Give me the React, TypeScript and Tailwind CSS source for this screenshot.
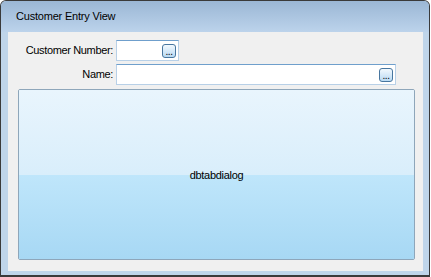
function DotsButton() {
  return (
    <div className="flex h-[14px] w-[14px] items-end justify-center rounded-[3px] border border-[#48769f] bg-gradient-to-b from-[#f3f9fe] to-[#b9daf3] pb-[1px] text-[10px] leading-[8px] tracking-[-0.5px]">
      ...
    </div>
  );
}

function LookupField({ label, width }: { label: string; width: string }) {
  return (
    <div className="flex items-center gap-[3px]">
      <span className="w-[105px] text-right tracking-[-0.35px]">{label}</span>
      <div
        className={`flex h-[21px] ${width} items-center justify-end border border-[#b8d0e7] border-t-[#6f9fcc] bg-white pr-[2px]`}
      >
        <DotsButton />
      </div>
    </div>
  );
}

export default function App() {
  return (
    <div className="h-[277px] w-[431px] bg-white font-['Liberation_Sans',Arial,sans-serif] text-[11px] text-black">
      <div className="flex h-[277px] w-[430px] flex-col overflow-hidden rounded-t-[6px] border border-b-2 border-[#3a3a3a] bg-[#bfd5ea]">
        <div className="flex h-[31px] shrink-0 items-center bg-gradient-to-b from-[#9bb7d5] to-[#bcd3eb] pl-[15px] pb-[1px] tracking-[-0.2px]">
          Customer Entry View
        </div>

        <div className="mb-[4px] ml-[7px] mr-[6px] flex flex-1 flex-col bg-[#f0f0f0] pt-[8px] pb-[11px]">
          <LookupField label="Customer Number:" width="w-[63px]" />
          <div className="mt-[3px]">
            <LookupField label="Name:" width="w-[280px]" />
          </div>

          <div className="relative mt-[4px] ml-[10px] mr-[8px] flex flex-1 flex-col overflow-hidden rounded-[2px] border border-[#8ea6ba] shadow-[inset_1px_1px_0_#ffffff]">
            <div className="flex-1 bg-gradient-to-b from-[#e9f5fd] to-[#d9eefb]" />
            <div className="flex-1 bg-gradient-to-b from-[#bfe6fb] to-[#a7d8f4]" />
            <div className="absolute inset-0 flex items-center justify-center pt-[1px] tracking-[-0.3px]">
              dbtabdialog
            </div>
          </div>
        </div>
      </div>
    </div>
  );
}
